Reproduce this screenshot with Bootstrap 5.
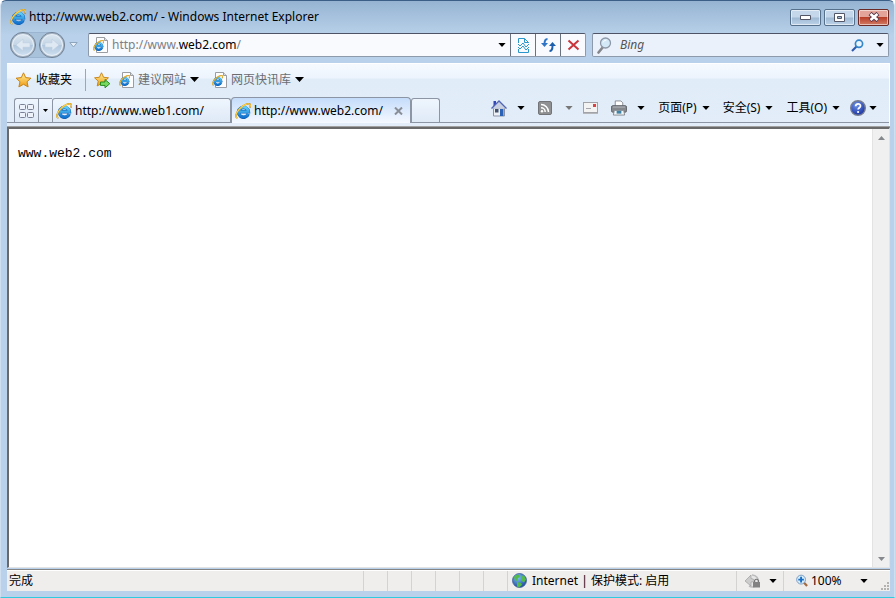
<!DOCTYPE html>
<html lang="zh-CN">
<head>
<meta charset="utf-8">
<meta name="viewport" content="width=device-width, initial-scale=1">
<title>http://www.web2.com/ - Windows Internet Explorer</title>
<link rel="stylesheet" href="https://cdn.jsdelivr.net/npm/bootstrap@5.3.0/dist/css/bootstrap.min.css">
<style>
body{font:12px/16px "Noto Sans","Noto Sans CJK SC",sans-serif;color:#000;background:#fff}
button,input{font:inherit;color:inherit;border:0;background:none;padding:0;border-radius:0}
svg{display:block;flex:none}
a,a:hover{color:inherit;text-decoration:none}
.gap-3px{gap:3px}
.gap-5px{gap:5px}
.me-10{margin-right:10px}
.me-13{margin-right:13px}
.win{background:linear-gradient(#96b4d2,#b9d1ea 34px,#b9d1ea);border:1px solid #cfdff0;border-top-color:#3b5f86;border-bottom-color:#31cbdf;border-radius:6px 6px 0 0;padding:0 4px 6px 6px}
.titlebar{height:32px;padding:0 1px 0 3px}
.wbtn{width:31px;height:17px;border:1px solid #56708c;border-radius:2px;box-shadow:inset 0 0 0 1px #ffffff88;background:linear-gradient(#c5d7ea 48%,#9fb9d3 52%,#bdd3e9);display:flex;align-items:center;justify-content:center}
.wbtn.shut{background:linear-gradient(#e4a398 45%,#b93e28 50%,#d27c66);border-color:#6b2a25}
.addrbar{height:30px;padding:0 1px 6px 3px}
.nav-pair{background:#a9c2dc;box-shadow:inset 0 0 0 1px #9bb4cf}
.rnd{width:26px;height:26px;border-radius:50%;border:1px solid #6f7f91;background:linear-gradient(#dfe8f1,#c3d5e6 48%,#b0c7dd 52%,#d3e4f3);display:flex;align-items:center;justify-content:center;box-shadow:inset 0 0 0 1px #a9b8c8,inset 0 0 0 2px #e6eef6}
.mru{margin:0 10px 0 4px}
.box{height:24px;border:1px solid #8c9aab;border-top-color:#4e5465;background:#f8fafe;border-radius:2px}
.urlbox{margin-right:6px}
.box .seg{width:25px;height:100%;border-left:1px solid #6b7280;display:flex;align-items:center;justify-content:center}
.urltext{color:#7c8087}
.urltext b{font-weight:400;color:#000}
.findbox{width:297px;background:#ebf1fb}
.findbox input{font-style:italic;min-width:0}
.findbox input::placeholder{color:#555;opacity:1}
.chrome{background:linear-gradient(#f6faff,#edf4fd 14px,#e0ecf8 15px,#e2edf9);border-top:1px solid #fff;border-right:1px solid #fff}
.favbar{height:31px;padding:0 8px}
.gray{color:#6a6d72}
.vline{width:1px;height:22px;background:#a0a6ae}
.tabrow{height:28px;padding:0 0 0 7px;border-bottom:1px solid #8b95a3}
.tabx{height:24px;border:1px solid #8b95a3;border-bottom:0;border-radius:3px 3px 0 0;background:linear-gradient(#eef5fd,#dfeaf7);padding:0 3px}
.tabx.on{height:26px;background:linear-gradient(#c4dcfa,#f5f9ff);margin-bottom:-1px;border-radius:4px 4px 0 0}
.tabx.t1{width:179px}
.tabx.t2{width:180px}
.tabx.new{width:29px}
.quick{width:24px;border-right:0;border-radius:3px 0 0 0}
.quickm{width:14px;border-right:0;border-radius:0}
.tools{padding:0 8px 2px 0;height:26px}
.page{background:#fff;border:2px solid #a5a5a5;border-top-color:#696969;border-left-color:#696969;border-right:1px solid #e3e3e3;border-bottom:1px solid #e3e3e3;min-height:0;box-shadow:0 -1px #a0a0a0}
.doc{font:13px/16px "Liberation Mono",monospace;padding:17px 9px}
.sbar{width:17px;background:#f0f0f0;border-left:1px solid #e3e3e3}
.sbar button{height:17px}
.status{height:22px;background:#f0eded;border-top:1px solid #858585;margin-top:1px;box-shadow:inset 0 1px #fff}
.done{padding-left:2px}
.status .cell{width:24px;height:20px;border-left:1px solid #d5d2d2}
.status .lcell{border-left:1px solid #d5d2d2;height:20px}
.zone{width:229px}
.prot{width:47px}
.zoomc{width:107px}
</style>
<script src="https://cdn.jsdelivr.net/npm/bootstrap@5.3.0/dist/js/bootstrap.bundle.min.js"></script>
</head>
<body>
<svg width="0" height="0" class="position-absolute" aria-hidden="true">
<defs>
<linearGradient id="gb" x1="0" y1="0" x2="0" y2="1"><stop offset="0" stop-color="#5fd0fa"/><stop offset="1" stop-color="#1273cf"/></linearGradient>
<linearGradient id="gs" x1="0" y1="0" x2="0" y2="1"><stop offset="0" stop-color="#fff2a0"/><stop offset="1" stop-color="#f09a10"/></linearGradient>
<radialGradient id="gh" cx=".4" cy=".3" r=".8"><stop offset="0" stop-color="#6f95e8"/><stop offset="1" stop-color="#10269a"/></radialGradient>
<radialGradient id="gw" cx=".4" cy=".3" r=".8"><stop offset="0" stop-color="#7cc3f2"/><stop offset="1" stop-color="#143c92"/></radialGradient>
<symbol id="ie" viewBox="0 0 16 16"><path d="M13.200 10.900A4.900 4.900 0 1 1 13.400 8.800H4.600" fill="none" stroke="#0f5fb4" stroke-width="3.400"/><path d="M13.100 10.800A4.900 4.900 0 1 1 13.400 8.800H4.600" fill="none" stroke="url(#gb)" stroke-width="2.600"/><path d="M2.400 15C-.2 14.600.8 9.800 4.600 5.800 8.700 1.700 13.600-.4 15 1.300c.6.800.4 2-.2 3.300" fill="none" stroke="#b5811a" stroke-width="1.600"/><path d="M2.400 15C-.2 14.600.8 9.800 4.600 5.800 8.700 1.700 13.600-.4 15 1.300c.4.600.4 1.600 0 2.600" fill="none" stroke="#ffd34d" stroke-width="1.100"/></symbol>
<symbol id="iedoc" viewBox="0 0 15 16"><path d="M3.500.5h8l3 3v12h-11z" fill="#fdfdfd" stroke="#9a9da1"/><path d="M11.500.5v3h3" fill="#dcdfe3" stroke="#9a9da1"/><use href="#ie" x="0" y="3" width="11" height="11"/></symbol>
<symbol id="dn" viewBox="0 0 9 5"><path d="M0 0h9L4.500 5z" fill="currentColor"/></symbol>
<symbol id="star" viewBox="0 0 16 16"><path d="M8 .8l2.200 4.800 5.200.6-3.900 3.500 1.100 5.200L8 12.300l-4.600 2.600 1.100-5.200L.6 6.200l5.200-.6z" fill="url(#gs)" stroke="#c98212" stroke-linejoin="round"/></symbol>
</defs>
</svg>

<div class="win d-flex flex-column vh-100">
  <header class="titlebar d-flex align-items-center gap-3px">
    <svg width="16" height="16"><use href="#ie"/></svg>
    <span class="flex-grow-1 text-truncate">http://www.web2.com/ - Windows Internet Explorer</span>
    <div class="d-flex gap-3px">
      <button class="wbtn" aria-label="最小化"><svg width="11" height="7"><path d="M.5 1.500h10v4H.5z" fill="#fff" stroke="#535666"/></svg></button>
      <button class="wbtn" aria-label="最大化"><svg width="11" height="9"><path d="M.5.500h10v8H.5z" fill="#fff" stroke="#535666"/><path d="M3.500 3.500h4v2h-4z" fill="#9fb9d3" stroke="#535666"/></svg></button>
      <button class="wbtn shut" aria-label="关闭"><svg width="12" height="10"><path d="M2 1.500l8 7M10 1.500l-8 7" stroke="#58384a" stroke-width="4.400"/><path d="M2.500 2l7 6M9.500 2l-7 6" stroke="#fff" stroke-width="2.600"/></svg></button>
    </div>
  </header>

  <div class="addrbar d-flex align-items-center">
    <div class="nav-pair d-flex gap-3px flex-shrink-0 rounded-pill">
      <button class="rnd" aria-label="后退"><svg width="16" height="14"><path d="M1 7l7-6v3.800h7v4.400H8V13z" fill="#dfe9f3" stroke="#bccddf" stroke-width=".6"/></svg></button>
      <button class="rnd" aria-label="前进"><svg width="16" height="14"><path d="M15 7L8 1v3.800H1v4.400h7V13z" fill="#dfe9f3" stroke="#bccddf" stroke-width=".6"/></svg></button>
    </div>
    <button class="mru" aria-label="最近的网页"><svg width="9" height="6"><path d="M.8.500h7.400L4.500 5z" fill="#e6eef7" stroke="#8fa5bd"/></svg></button>
    <div class="box urlbox d-flex align-items-center flex-grow-1">
      <svg class="mx-1" width="15" height="16"><use href="#iedoc"/></svg>
      <a class="urltext flex-grow-1" href="#">http://www.<b>web2.com</b>/</a>
      <button class="px-1" aria-label="地址列表"><svg width="8" height="4"><use href="#dn"/></svg></button>
      <button class="seg" aria-label="兼容性视图"><svg width="13" height="15" fill="none" stroke="#2a96cc"><path d="M1.500 5V.5h6l4 4V5M7.500.5v4h4M1.500 11v3.500h10V11"/><path d="M1 6l2 2 3-3 3 4 3-3M1 9l2 2 3-3 3 4 3-3"/></svg></button>
      <button class="seg" aria-label="刷新"><svg width="15" height="14" fill="none"><path d="M6.500 1C4 1 3.500 2.500 3.500 6" stroke="#2e75c8" stroke-width="2"/><path d="M0 5h7L3.500 9z" fill="#2e75c8"/><path d="M8.500 13c2.500 0 3-1.500 3-5" stroke="#1d5fae" stroke-width="2"/><path d="M8 8h7l-3.500-4z" fill="#1d5fae"/></svg></button>
      <button class="seg" aria-label="停止"><svg width="13" height="12"><path d="M1.500 1.500l10 9M11.500 1.500l-10 9" stroke="#c9353c" stroke-width="2"/></svg></button>
    </div>
    <div class="box findbox d-flex align-items-center flex-shrink-0">
      <svg class="ms-1 me-2" width="15" height="17"><path d="M6 10l-4.500 5.500" stroke="#85878c" stroke-width="2.600" stroke-linecap="round"/><circle cx="8.500" cy="6" r="5" fill="#d4e9f8" stroke="#8d98a6" stroke-width="1.300"/><path d="M6 5.500q1-2.500 3.500-2.500" fill="none" stroke="#fff"/></svg>
      <input class="flex-grow-1" type="text" placeholder="Bing" aria-label="Bing">
      <button class="px-2" aria-label="搜索"><svg width="13" height="13"><path d="M5.500 7.500L1 12" stroke="#2f5aab" stroke-width="2.200"/><circle cx="8" cy="4.800" r="3.600" fill="#eaf5fd" stroke="#3486c8" stroke-width="1.700"/></svg></button>
      <button class="px-1" aria-label="搜索选项"><svg width="8" height="4"><use href="#dn"/></svg></button>
    </div>
  </div>

  <div class="chrome flex-shrink-0">
    <nav class="favbar d-flex align-items-center" aria-label="收藏夹栏">
      <button class="d-flex align-items-center gap-1 me-13"><svg width="17" height="16"><use href="#star"/></svg>收藏夹</button>
      <span class="vline me-2"></span>
      <button class="me-2" aria-label="添加到收藏夹栏"><svg width="17" height="16"><use href="#star" width="15" height="15"/><path d="M6.500 10h4.500V7.500l4.800 4.200-4.800 4.100v-2.400H6.500z" fill="#79d860" stroke="#278b20"/></svg></button>
      <a href="#" class="gray d-flex align-items-center gap-1 me-13"><svg width="15" height="16"><use href="#iedoc"/></svg>建议网站<svg class="text-black" width="9" height="5"><use href="#dn"/></svg></a>
      <a href="#" class="gray d-flex align-items-center gap-1"><svg width="15" height="16"><use href="#iedoc"/></svg>网页快讯库<svg class="text-black" width="9" height="5"><use href="#dn"/></svg></a>
    </nav>
    <div class="tabrow d-flex align-items-end">
      <button class="tabx quick d-flex align-items-center justify-content-center" aria-label="快速导航选项卡"><svg width="15" height="14" fill="#eef3fb" stroke="#7b8194"><rect x=".5" y=".5" width="6" height="5" rx="1"/><rect x="8.500" y=".5" width="6" height="5" rx="1"/><rect x=".5" y="8.500" width="6" height="5" rx="1"/><rect x="8.500" y="8.500" width="6" height="5" rx="1"/></svg></button>
      <button class="tabx quickm d-flex align-items-center justify-content-center" aria-label="选项卡列表"><svg width="5" height="3"><use href="#dn"/></svg></button>
      <button class="tabx t1 d-flex align-items-center gap-3px"><svg width="16" height="16"><use href="#ie"/></svg>http://www.web1.com/</button>
      <div class="tabx t2 on d-flex align-items-center gap-3px"><svg width="16" height="16"><use href="#ie"/></svg><a href="#" class="flex-grow-1">http://www.web2.com/</a><button class="pe-1" aria-label="关闭选项卡"><svg width="9" height="8"><path d="M1 .5l7 7M8 .5l-7 7" stroke="#898e97" stroke-width="2"/></svg></button></div>
      <button class="tabx new" aria-label="新选项卡"></button>
      <div class="tools d-flex align-items-center ms-auto">
        <button class="me-10" aria-label="主页"><svg width="16" height="17"><path d="M2.500 8h11v8h-11z" fill="#edf0f5" stroke="#8b93a5"/><path d="M2.500 1h2.500v5H2.500z" fill="#3445b5"/><path d="M.5 8.500L8 1l7.500 7.500" fill="#c9d0e2" stroke="#5264b4" stroke-width="1.300"/><path d="M4 9h3.500v3.500H4z" fill="#42516c"/><path d="M9 9h3.500v7H9z" fill="#2a62b8"/></svg></button>
        <button class="me-13" aria-label="主页选项"><svg width="8" height="4"><use href="#dn"/></svg></button>
        <button class="me-13" aria-label="源"><svg width="14" height="14" fill="none" stroke="#fff" stroke-width="1.500"><rect x=".5" y=".5" width="13" height="13" rx="1.500" fill="#8f9092" stroke="#737477" stroke-width="1"/><path d="M3 3.500A7.500 7.500 0 0 1 10.500 11M3 6.800A4.200 4.200 0 0 1 7.200 11"/><circle cx="4" cy="10.200" r="1.200" fill="#fff" stroke="none"/></svg></button>
        <button class="me-10" aria-label="源选项"><svg width="8" height="4" color="#777"><use href="#dn"/></svg></button>
        <button class="me-13" aria-label="阅读邮件"><svg width="15" height="12"><rect x=".5" y=".5" width="14" height="10" fill="#f3f3f4" stroke="#a2a3a9"/><path d="M0 11.500h15" stroke="#b4b7bb"/><path d="M3 6.500h5" stroke="#a5a7ad"/><path d="M10 2h3v3h-3z" fill="#dd4141"/></svg></button>
        <button class="me-10" aria-label="打印"><svg width="16" height="16" viewBox="0 0 17 16"><path d="M4.500.5h6l2 2v4h-8z" fill="#fff" stroke="#85888d"/><rect x=".5" y="5.500" width="16" height="7" rx="1.500" fill="#85888d" stroke="#5f636a"/><path d="M2 7h13" stroke="#b7babf"/><path d="M3.500 10.500h10l1 5h-12z" fill="#f4f6f8" stroke="#81868d"/><path d="M6 11h5v3H6z" fill="#3e83a5"/></svg></button>
        <button class="me-13" aria-label="打印选项"><svg width="8" height="4"><use href="#dn"/></svg></button>
        <button class="d-flex align-items-center gap-5px me-13">页面(P)<svg width="8" height="4"><use href="#dn"/></svg></button>
        <button class="d-flex align-items-center gap-5px me-13">安全(S)<svg width="8" height="4"><use href="#dn"/></svg></button>
        <button class="d-flex align-items-center gap-5px me-10">工具(O)<svg width="8" height="4"><use href="#dn"/></svg></button>
        <button class="d-flex align-items-center gap-3px pe-1" aria-label="帮助"><svg width="16" height="16"><circle cx="8" cy="8" r="7.300" fill="url(#gh)" stroke="#777d90" stroke-width="1.400"/><path d="M5.600 6.200C5.600 3 10.600 3.200 10.500 6c0 1.700-2.400 1.800-2.400 3.600" fill="none" stroke="#fff" stroke-width="1.700"/><circle cx="8.100" cy="12" r="1.100" fill="#fff"/></svg><svg width="8" height="4"><use href="#dn"/></svg></button>
      </div>
    </div>
    <div class="pt-1"></div>
  </div>

  <main class="page d-flex flex-grow-1">
    <div class="doc flex-grow-1">www.web2.com</div>
    <div class="sbar d-flex flex-column justify-content-between align-items-center">
      <button aria-label="向上滚动"><svg width="7" height="4"><path d="M0 4h7L3.500 0z" fill="#85888c"/></svg></button>
      <button aria-label="向下滚动"><svg width="7" height="4" color="#85888c"><use href="#dn"/></svg></button>
    </div>
  </main>

  <footer class="status d-flex align-items-center flex-shrink-0">
    <span class="flex-grow-1 done">完成</span>
    <span class="cell"></span><span class="cell"></span><span class="cell"></span><span class="cell"></span><span class="cell"></span><span class="cell"></span>
    <div class="lcell zone d-flex align-items-center gap-5px ps-1"><svg width="15" height="15"><circle cx="7.500" cy="7.500" r="7" fill="url(#gw)" stroke="#3d6098" stroke-width=".8"/><path d="M2 4q2-3 5-2l1 2-2 1-1 3-2-1zM9 3l3-.5 2 4-2 3-3-2zM5 9l4 1 1 2-3 2.500-2-1z" fill="#54bb48"/></svg>Internet | 保护模式: 启用</div>
    <div class="lcell prot d-flex align-items-center gap-2 ps-2"><svg width="16" height="14"><path d="M7 1a6 6 0 1 1-3 11" fill="#e6e6e6" stroke="#bbb" stroke-width="1.500"/><path d="M0 7l6-6v3.500q3 0 4 3L6 8v4z" fill="#ccc" stroke="#9d9d9d" stroke-width=".7"/><path d="M9.500 8V6.500q2-2.500 4 0V8" fill="none" stroke="#777" stroke-width="1.200"/><path d="M8 8h7v5.500H8z" fill="#828282"/></svg><svg width="8" height="4"><use href="#dn"/></svg></div>
    <div class="lcell zoomc d-flex align-items-center"><button class="d-flex align-items-center gap-3px flex-grow-1 ms-2 ps-1"><svg width="12" height="14" viewBox="0 0 13 14"><path d="M8 8l4 4.500" stroke="#a46d42" stroke-width="2.400"/><circle cx="5.500" cy="5.500" r="4.800" fill="#d8edfc" stroke="#7599bd"/><path d="M5.500 2.500v6M2.500 5.500h6" stroke="#176ec4" stroke-width="2"/></svg>100%<svg class="ms-auto me-13" width="8" height="4"><use href="#dn"/></svg></button><svg class="align-self-end" width="9" height="9" fill="#b4b1b1"><path d="M6 0h2v2H6zM3 3h2v2H3zM6 3h2v2H6zM0 6h2v2H0zM3 6h2v2H3zM6 6h2v2H6z"/></svg></div>
  </footer>
</div>
</body>
</html>
